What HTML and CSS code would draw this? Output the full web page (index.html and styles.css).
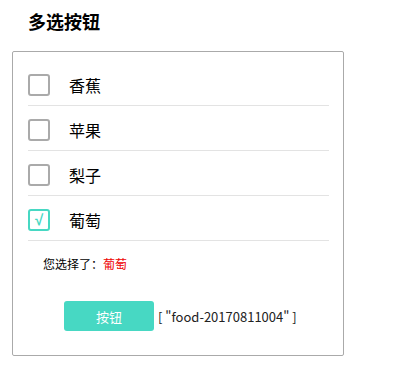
FILE: index.html
```html
<!DOCTYPE html>
<html lang="zh">
<head>
<meta charset="utf-8">
<link rel="stylesheet" href="styles.css">
</head>
<body>
<h2 class="title">多选按钮</h2>
<div class="card">
  <div class="row"><span class="box"></span><span class="label">香蕉</span></div>
  <div class="row"><span class="box"></span><span class="label">苹果</span></div>
  <div class="row"><span class="box"></span><span class="label">梨子</span></div>
  <div class="row"><span class="box checked">√</span><span class="label">葡萄</span></div>
  <p class="result">您选择了：<span class="picked">葡萄</span></p>
  <div class="actions"><button class="btn">按钮</button> <span class="value">[ "food-20170811004" ]</span></div>
</div>
</body>
</html>
```
FILE: styles.css
```css
html, body {
  margin: 0;
  padding: 0;
  background: #fff;
}
body {
  font-family: "Noto Sans CJK SC", "Noto Sans", sans-serif;
  color: #000;
}
.title {
  margin: 0;
  padding: 9px 0 0 28px;
  font-size: 18px;
  line-height: 24px;
  font-weight: bold;
  height: 24px;
}
.card {
  margin: 18px 0 0 12px;
  border: 1px solid #aaa;
  border-radius: 2px;
  padding: 9px 14px 0 15px;
  box-sizing: border-box;
  height: 305px;
  width: 332px;
}
.row {
  display: flex;
  align-items: center;
  padding-top: 3px;
  box-sizing: border-box;
  border-bottom: 1px solid #e3e3e3;
  height: 45px;
}
.box {
  width: 22px;
  height: 22px;
  box-sizing: border-box;
  border: 2px solid #aaa;
  border-radius: 3px;
  display: flex;
  align-items: center;
  justify-content: center;
  font-family: "Liberation Sans", sans-serif;
  font-size: 15px;
  font-weight: bold;
  line-height: 1;
  color: #47d8c3;
}
.box.checked {
  border-color: #47d8c3;
}
.label {
  margin-left: 19px;
  font-size: 16px;
  line-height: 20px;
}
.result {
  margin: 15px 0 0 15px;
  font-size: 12px;
  line-height: 16px;
}
.picked {
  color: #e00;
}
.actions {
  margin: 29px 0 0 36px;
  display: flex;
  align-items: center;
  gap: 4px;
}
.btn {
  width: 90px;
  height: 30px;
  border: none;
  border-radius: 3px;
  background: #47d8c3;
  color: #fff;
  font-family: "Noto Sans CJK SC", sans-serif;
  font-size: 13px;
  padding: 0;
}
.value {
  font-size: 13px;
  color: #222;
}
```
